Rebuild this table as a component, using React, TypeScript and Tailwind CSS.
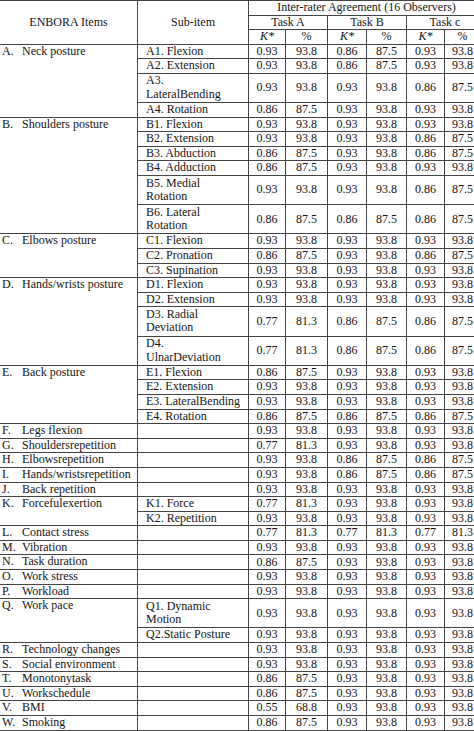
import React from "react";

type Sub = { label: string[]; vals: string[] };
type Group = { letter: string; name: string; subs: Sub[] };

const v = (s: string) => s.split(" ");

const groups: Group[] = [
  {
    letter: "A.",
    name: "Neck posture",
    subs: [
      { label: ["A1. Flexion"], vals: v("0.93 93.8 0.86 87.5 0.93 93.8") },
      { label: ["A2. Extension"], vals: v("0.93 93.8 0.86 87.5 0.93 93.8") },
      { label: ["A3.", "LateralBending"], vals: v("0.93 93.8 0.93 93.8 0.86 87.5") },
      { label: ["A4. Rotation"], vals: v("0.86 87.5 0.93 93.8 0.93 93.8") },
    ],
  },
  {
    letter: "B.",
    name: "Shoulders posture",
    subs: [
      { label: ["B1. Flexion"], vals: v("0.93 93.8 0.93 93.8 0.93 93.8") },
      { label: ["B2. Extension"], vals: v("0.93 93.8 0.93 93.8 0.86 87.5") },
      { label: ["B3. Abduction"], vals: v("0.86 87.5 0.93 93.8 0.86 87.5") },
      { label: ["B4. Adduction"], vals: v("0.86 87.5 0.93 93.8 0.93 93.8") },
      { label: ["B5. Medial", "Rotation"], vals: v("0.93 93.8 0.93 93.8 0.86 87.5") },
      { label: ["B6. Lateral", "Rotation"], vals: v("0.86 87.5 0.86 87.5 0.86 87.5") },
    ],
  },
  {
    letter: "C.",
    name: "Elbows posture",
    subs: [
      { label: ["C1. Flexion"], vals: v("0.93 93.8 0.93 93.8 0.93 93.8") },
      { label: ["C2. Pronation"], vals: v("0.86 87.5 0.93 93.8 0.86 87.5") },
      { label: ["C3. Supination"], vals: v("0.93 93.8 0.93 93.8 0.93 93.8") },
    ],
  },
  {
    letter: "D.",
    name: "Hands/wrists posture",
    subs: [
      { label: ["D1. Flexion"], vals: v("0.93 93.8 0.93 93.8 0.93 93.8") },
      { label: ["D2. Extension"], vals: v("0.93 93.8 0.93 93.8 0.93 93.8") },
      { label: ["D3. Radial", "Deviation"], vals: v("0.77 81.3 0.86 87.5 0.86 87.5") },
      { label: ["D4.", "UlnarDeviation"], vals: v("0.77 81.3 0.86 87.5 0.86 87.5") },
    ],
  },
  {
    letter: "E.",
    name: "Back posture",
    subs: [
      { label: ["E1. Flexion"], vals: v("0.86 87.5 0.93 93.8 0.93 93.8") },
      { label: ["E2. Extension"], vals: v("0.93 93.8 0.93 93.8 0.93 93.8") },
      { label: ["E3. LateralBending"], vals: v("0.93 93.8 0.93 93.8 0.93 93.8") },
      { label: ["E4. Rotation"], vals: v("0.86 87.5 0.86 87.5 0.86 87.5") },
    ],
  },
  { letter: "F.", name: "Legs flexion", subs: [{ label: [""], vals: v("0.93 93.8 0.93 93.8 0.93 93.8") }] },
  { letter: "G.", name: "Shouldersrepetition", subs: [{ label: [""], vals: v("0.77 81.3 0.93 93.8 0.93 93.8") }] },
  { letter: "H.", name: "Elbowsrepetition", subs: [{ label: [""], vals: v("0.93 93.8 0.86 87.5 0.86 87.5") }] },
  { letter: "I.", name: "Hands/wristsrepetition", subs: [{ label: [""], vals: v("0.93 93.8 0.86 87.5 0.86 87.5") }] },
  { letter: "J.", name: "Back repetition", subs: [{ label: [""], vals: v("0.93 93.8 0.93 93.8 0.93 93.8") }] },
  {
    letter: "K.",
    name: "Forcefulexertion",
    subs: [
      { label: ["K1. Force"], vals: v("0.77 81.3 0.93 93.8 0.93 93.8") },
      { label: ["K2. Repetition"], vals: v("0.93 93.8 0.93 93.8 0.93 93.8") },
    ],
  },
  { letter: "L.", name: "Contact stress", subs: [{ label: [""], vals: v("0.77 81.3 0.77 81.3 0.77 81.3") }] },
  { letter: "M.", name: "Vibration", subs: [{ label: [""], vals: v("0.93 93.8 0.93 93.8 0.93 93.8") }] },
  { letter: "N.", name: "Task duration", subs: [{ label: [""], vals: v("0.86 87.5 0.93 93.8 0.93 93.8") }] },
  { letter: "O.", name: "Work stress", subs: [{ label: [""], vals: v("0.93 93.8 0.93 93.8 0.93 93.8") }] },
  { letter: "P.", name: "Workload", subs: [{ label: [""], vals: v("0.93 93.8 0.93 93.8 0.93 93.8") }] },
  {
    letter: "Q.",
    name: "Work pace",
    subs: [
      { label: ["Q1. Dynamic", "Motion"], vals: v("0.93 93.8 0.93 93.8 0.93 93.8") },
      { label: ["Q2.Static Posture"], vals: v("0.93 93.8 0.93 93.8 0.93 93.8") },
    ],
  },
  { letter: "R.", name: "Technology changes", subs: [{ label: [""], vals: v("0.93 93.8 0.93 93.8 0.93 93.8") }] },
  { letter: "S.", name: "Social environment", subs: [{ label: [""], vals: v("0.93 93.8 0.93 93.8 0.93 93.8") }] },
  { letter: "T.", name: "Monotonytask", subs: [{ label: [""], vals: v("0.86 87.5 0.93 93.8 0.93 93.8") }] },
  { letter: "U.", name: "Workschedule", subs: [{ label: [""], vals: v("0.86 87.5 0.93 93.8 0.93 93.8") }] },
  { letter: "V.", name: "BMI", subs: [{ label: [""], vals: v("0.55 68.8 0.93 93.8 0.93 93.8") }] },
  { letter: "W.", name: "Smoking", subs: [{ label: [""], vals: v("0.86 87.5 0.93 93.8 0.93 93.8") }] },
];

const cell = "border-r border-b border-[#444444] p-0";

export default function App() {
  return (
    <div
      className="w-[474px] h-[731px] overflow-hidden bg-white text-[#141414] text-[12px] leading-[13.5px]"
      style={{ fontFamily: '"Liberation Serif", "Times New Roman", serif' }}
    >
      <table className="table-fixed border-separate border-spacing-0 w-[481px]">
        <colgroup>
          <col className="w-[138px]" />
          <col className="w-[111px]" />
          <col className="w-[37px]" />
          <col className="w-[42px]" />
          <col className="w-[39px]" />
          <col className="w-[40px]" />
          <col className="w-[38px]" />
          <col className="w-[36px]" />
        </colgroup>
        <thead>
          <tr className="h-[14.6px]">
            <td rowSpan={3} className={`${cell} border-t text-center align-middle`}>
              ENBORA Items
            </td>
            <td rowSpan={3} className={`${cell} border-t text-center align-middle`}>
              Sub-item
            </td>
            <td colSpan={6} className={`${cell} border-t text-center align-middle pl-[4px]`}>
              Inter-rater Agreement (16 Observers)
            </td>
          </tr>
          <tr className="h-[14.6px]">
            <td colSpan={2} className={`${cell} text-center`}>Task A</td>
            <td colSpan={2} className={`${cell} text-center`}>Task B</td>
            <td colSpan={2} className={`${cell} text-center pl-[3px]`}>Task c</td>
          </tr>
          <tr className="h-[14.6px]">
            <td className={`${cell} text-center italic`}>K*</td>
            <td className={`${cell} text-center`}>%</td>
            <td className={`${cell} text-center italic`}>K*</td>
            <td className={`${cell} text-center`}>%</td>
            <td className={`${cell} text-center italic`}>K*</td>
            <td className={`${cell} text-center`}>%</td>
          </tr>
        </thead>
        <tbody>
          {groups.map((g) =>
            g.subs.map((s, i) => (
              <tr key={g.letter + i} className={s.label.length > 1 ? "h-[29.2px]" : "h-[14.6px]"}>
                {i === 0 && (
                  <td rowSpan={g.subs.length} className={`${cell} align-top`}>
                    <div className="flex pl-[2px]">
                      <span className="w-[20px] shrink-0">{g.letter}</span>
                      <span className="whitespace-nowrap">{g.name}</span>
                    </div>
                  </td>
                )}
                <td className={`${cell} align-middle pl-[8px] whitespace-nowrap`}>
                  {s.label.map((l, k) => (
                    <div key={k}>{l}</div>
                  ))}
                </td>
                {s.vals.map((val, k) => (
                  <td key={k} className={`${cell} text-center align-middle`}>
                    {val}
                  </td>
                ))}
              </tr>
            ))
          )}
        </tbody>
      </table>
    </div>
  );
}
